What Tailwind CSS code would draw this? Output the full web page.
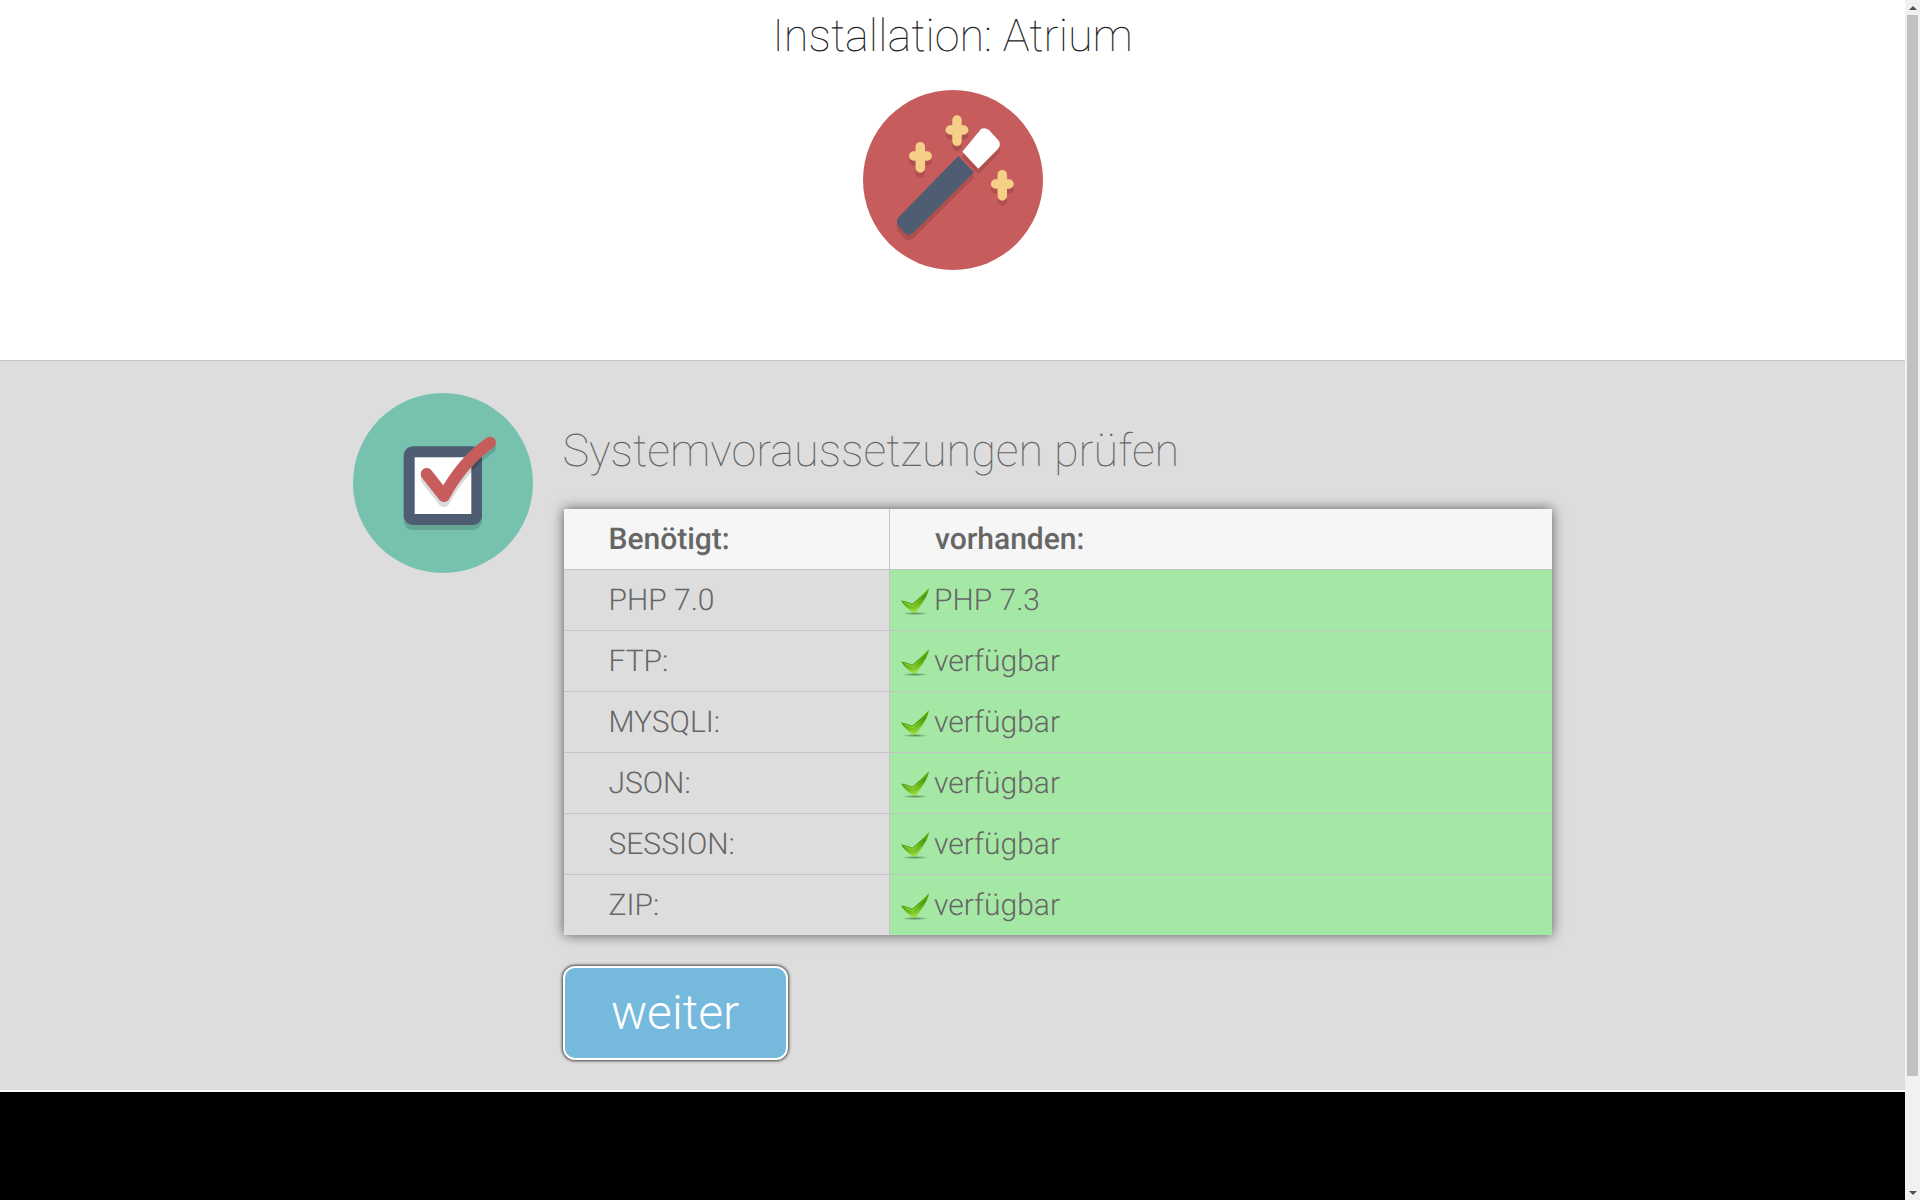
<!DOCTYPE html>
<html lang="de">
<head>
  <meta charset="UTF-8" />
  <meta name="viewport" content="width=device-width, initial-scale=1.0"/>
  <title>Installation: Atrium</title>
  <script src="https://cdn.jsdelivr.net/npm/@tailwindcss/browser@4"></script>
</head>
<body class="h-[1200px] overflow-hidden bg-black font-['Roboto',sans-serif] text-[#666] [text-rendering:geometricPrecision]">
  <!-- shared check mark -->
  <svg class="absolute w-0 h-0">
    <defs>
      <linearGradient id="okFill" x1="0" y1="0" x2="0.3" y2="1">
        <stop offset="0" stop-color="#7fc800"/>
        <stop offset="0.55" stop-color="#459a08"/>
        <stop offset="1" stop-color="#9bdc3a"/>
      </linearGradient>
      <radialGradient id="okShadow">
        <stop offset="0" stop-color="#3c6a3c" stop-opacity="0.75"/>
        <stop offset="1" stop-color="#3c6a3c" stop-opacity="0"/>
      </radialGradient>
      <g id="ok">
        <ellipse cx="14" cy="25.500" rx="14" ry="1.600" fill="url(#okShadow)"/>
        <path d="M0 12.500C4 13 8 14.500 11.500 15.500C17 11 23 6 28 0C27 8 21 16 15 24C14.500 24.800 13 24.800 12 24.300C8 22 3 18 0 12.500Z" fill="url(#okFill)"/>
        <path d="M2 13.500C6 14.500 9 16 11.500 17C17 13 22 8 26.500 3C22 9 17 14 12 18.500C8 18 4 16 2 13.500Z" fill="#a6e34d" opacity=".55"/>
      </g>
    </defs>
  </svg>

  <div class="flex h-full">
    <div class="w-[1905px] flex flex-col">
      <header class="h-[361px] bg-white border-b border-[#c4c4c4] flex flex-col items-center pt-[8px]">
        <h1 class="text-[45px] leading-[56px] font-[100] text-[#222]">Installation: Atrium</h1>
        <svg class="mt-[26px] w-[180px] h-[180px]" viewBox="0 0 180 180">
          <circle cx="90" cy="90" r="90" fill="#C75C5C"/>
          <g fill="#b04f50" stroke="#b04f50" transform="translate(0 5)">
            <path d="M95.300 66 111 82.300 50 143q-3 2.500-7 1.500l-8-9q-2-4 .3-8z"/>
            <path d="M99.300 61.700 115.300 78.700 135 59q3-4 1-8l-10-11q-4-3-8-1z"/>
            <path d="M57.300 56.700V78M50.700 66h13.500M94 30v21.300M87.300 40h13.400M139.300 84.700V106M132.600 94H146" fill="none" stroke-width="9.500" stroke-linecap="round"/>
          </g>
          <path d="M95.300 66 111 82.300 50 143q-3 2.500-7 1.500l-8-9q-2-4 .3-8z" fill="#4F5D73"/>
          <path d="M99.300 61.700 115.300 78.700 135 59q3-4 1-8l-10-11q-4-3-8-1z" fill="#fff"/>
          <path d="M57.300 56.700V78M50.700 66h13.500M94 30v21.300M87.300 40h13.400M139.300 84.700V106M132.600 94H146" fill="none" stroke="#F5CF87" stroke-width="9.500" stroke-linecap="round"/>
        </svg>
      </header>

      <main class="h-[731px] bg-[#ddd] border-b-2 border-white">
        <div class="w-[1200px] mx-auto flex pt-[32px]">
          <svg class="w-[180px] h-[180px] shrink-0" viewBox="0 0 180 180">
            <circle cx="90" cy="90" r="90" fill="#76C2AF"/>
            <rect x="50.700" y="58.300" width="78.300" height="78.700" rx="9" fill="#5f9f8f" opacity=".8"/>
            <rect x="50.700" y="53.300" width="78.300" height="78.700" rx="9" fill="#4F5D73"/>
            <rect x="61.700" y="64.300" width="56.600" height="56.700" fill="#fff"/>
            <path d="M73.700 86 91 108C103 86 118 68 137 54.700" fill="none" stroke="#000" stroke-opacity=".15" stroke-width="12" stroke-linecap="round" stroke-linejoin="round"/>
            <path d="M73.700 81 91 103C103 81 118 63 137 49.700" fill="none" stroke="#C75C5C" stroke-width="12" stroke-linecap="round" stroke-linejoin="round"/>
          </svg>
          <div class="ml-[31px] w-[988px]">
            <h2 class="text-[45px] leading-[56px] font-[100] text-[#666] mt-[30px] -ml-[1px]">Systemvoraussetzungen prüfen</h2>
            <table class="mt-[30px] w-[988px] table-fixed border-collapse text-[30px] font-light shadow-[0_0_12px_rgba(0,0,0,0.6)]">
              <thead>
                <tr class="h-[60px] bg-[#f6f6f6] font-medium">
                  <th class="w-[326px] pl-[45px] pt-[1px] text-left font-medium">Benötigt:</th>
                  <th class="pl-[45px] pt-[1px] text-left font-medium border-l border-[#c4c4c4]">vorhanden:</th>
                </tr>
              </thead>
              <tbody>
                <tr class="h-[61px] border-t border-[#c4c4c4]">
                  <td class="pl-[45px] pt-[1px]">PHP 7.0</td>
                  <td class="border-l border-[#c4c4c4] bg-[#a5e8a5] pt-[1px]"><div class="flex items-center pl-[11px] gap-[5px]"><svg class="w-[28px] h-[27px] mt-[3px]" viewBox="0 0 28 27"><use href="#ok"/></svg>PHP 7.3</div></td>
                </tr>
                <tr class="h-[61px] border-t border-[#c4c4c4]">
                  <td class="pl-[45px] pt-[1px]">FTP:</td>
                  <td class="border-l border-[#c4c4c4] bg-[#a5e8a5] pt-[1px]"><div class="flex items-center pl-[11px] gap-[5px]"><svg class="w-[28px] h-[27px] mt-[3px]" viewBox="0 0 28 27"><use href="#ok"/></svg>verfügbar</div></td>
                </tr>
                <tr class="h-[61px] border-t border-[#c4c4c4]">
                  <td class="pl-[45px] pt-[1px]">MYSQLI:</td>
                  <td class="border-l border-[#c4c4c4] bg-[#a5e8a5] pt-[1px]"><div class="flex items-center pl-[11px] gap-[5px]"><svg class="w-[28px] h-[27px] mt-[3px]" viewBox="0 0 28 27"><use href="#ok"/></svg>verfügbar</div></td>
                </tr>
                <tr class="h-[61px] border-t border-[#c4c4c4]">
                  <td class="pl-[45px] pt-[1px]">JSON:</td>
                  <td class="border-l border-[#c4c4c4] bg-[#a5e8a5] pt-[1px]"><div class="flex items-center pl-[11px] gap-[5px]"><svg class="w-[28px] h-[27px] mt-[3px]" viewBox="0 0 28 27"><use href="#ok"/></svg>verfügbar</div></td>
                </tr>
                <tr class="h-[61px] border-t border-[#c4c4c4]">
                  <td class="pl-[45px] pt-[1px]">SESSION:</td>
                  <td class="border-l border-[#c4c4c4] bg-[#a5e8a5] pt-[1px]"><div class="flex items-center pl-[11px] gap-[5px]"><svg class="w-[28px] h-[27px] mt-[3px]" viewBox="0 0 28 27"><use href="#ok"/></svg>verfügbar</div></td>
                </tr>
                <tr class="h-[61px] border-t border-[#c4c4c4]">
                  <td class="pl-[45px] pt-[1px]">ZIP:</td>
                  <td class="border-l border-[#c4c4c4] bg-[#a5e8a5] pt-[1px]"><div class="flex items-center pl-[11px] gap-[5px]"><svg class="w-[28px] h-[27px] mt-[3px]" viewBox="0 0 28 27"><use href="#ok"/></svg>verfügbar</div></td>
                </tr>
              </tbody>
            </table>
            <button class="block mt-[31px] -ml-[1px] w-[225px] h-[94px] rounded-[12px] border-2 border-white bg-[#75b9dd] text-white text-[48px] font-light shadow-[0_0_3px_1px_rgba(0,0,0,0.7)]">weiter</button>
          </div>
        </div>
      </main>
      <footer class="flex-1 bg-black"></footer>
    </div>

    <!-- scrollbar -->
    <div class="w-[15px] bg-[#f1f1f1] flex flex-col items-center">
      <div class="h-[15px] flex items-center justify-center">
        <div class="w-0 h-0 border-x-[4px] border-x-transparent border-b-[4px] border-b-[#505050]"></div>
      </div>
      <div class="w-[11px] h-[1061px] bg-[#c1c1c1]"></div>
      <div class="mt-auto h-[15px] flex items-center justify-center">
        <div class="w-0 h-0 border-x-[4px] border-x-transparent border-t-[4px] border-t-[#505050]"></div>
      </div>
    </div>
  </div>
</body>
</html>
